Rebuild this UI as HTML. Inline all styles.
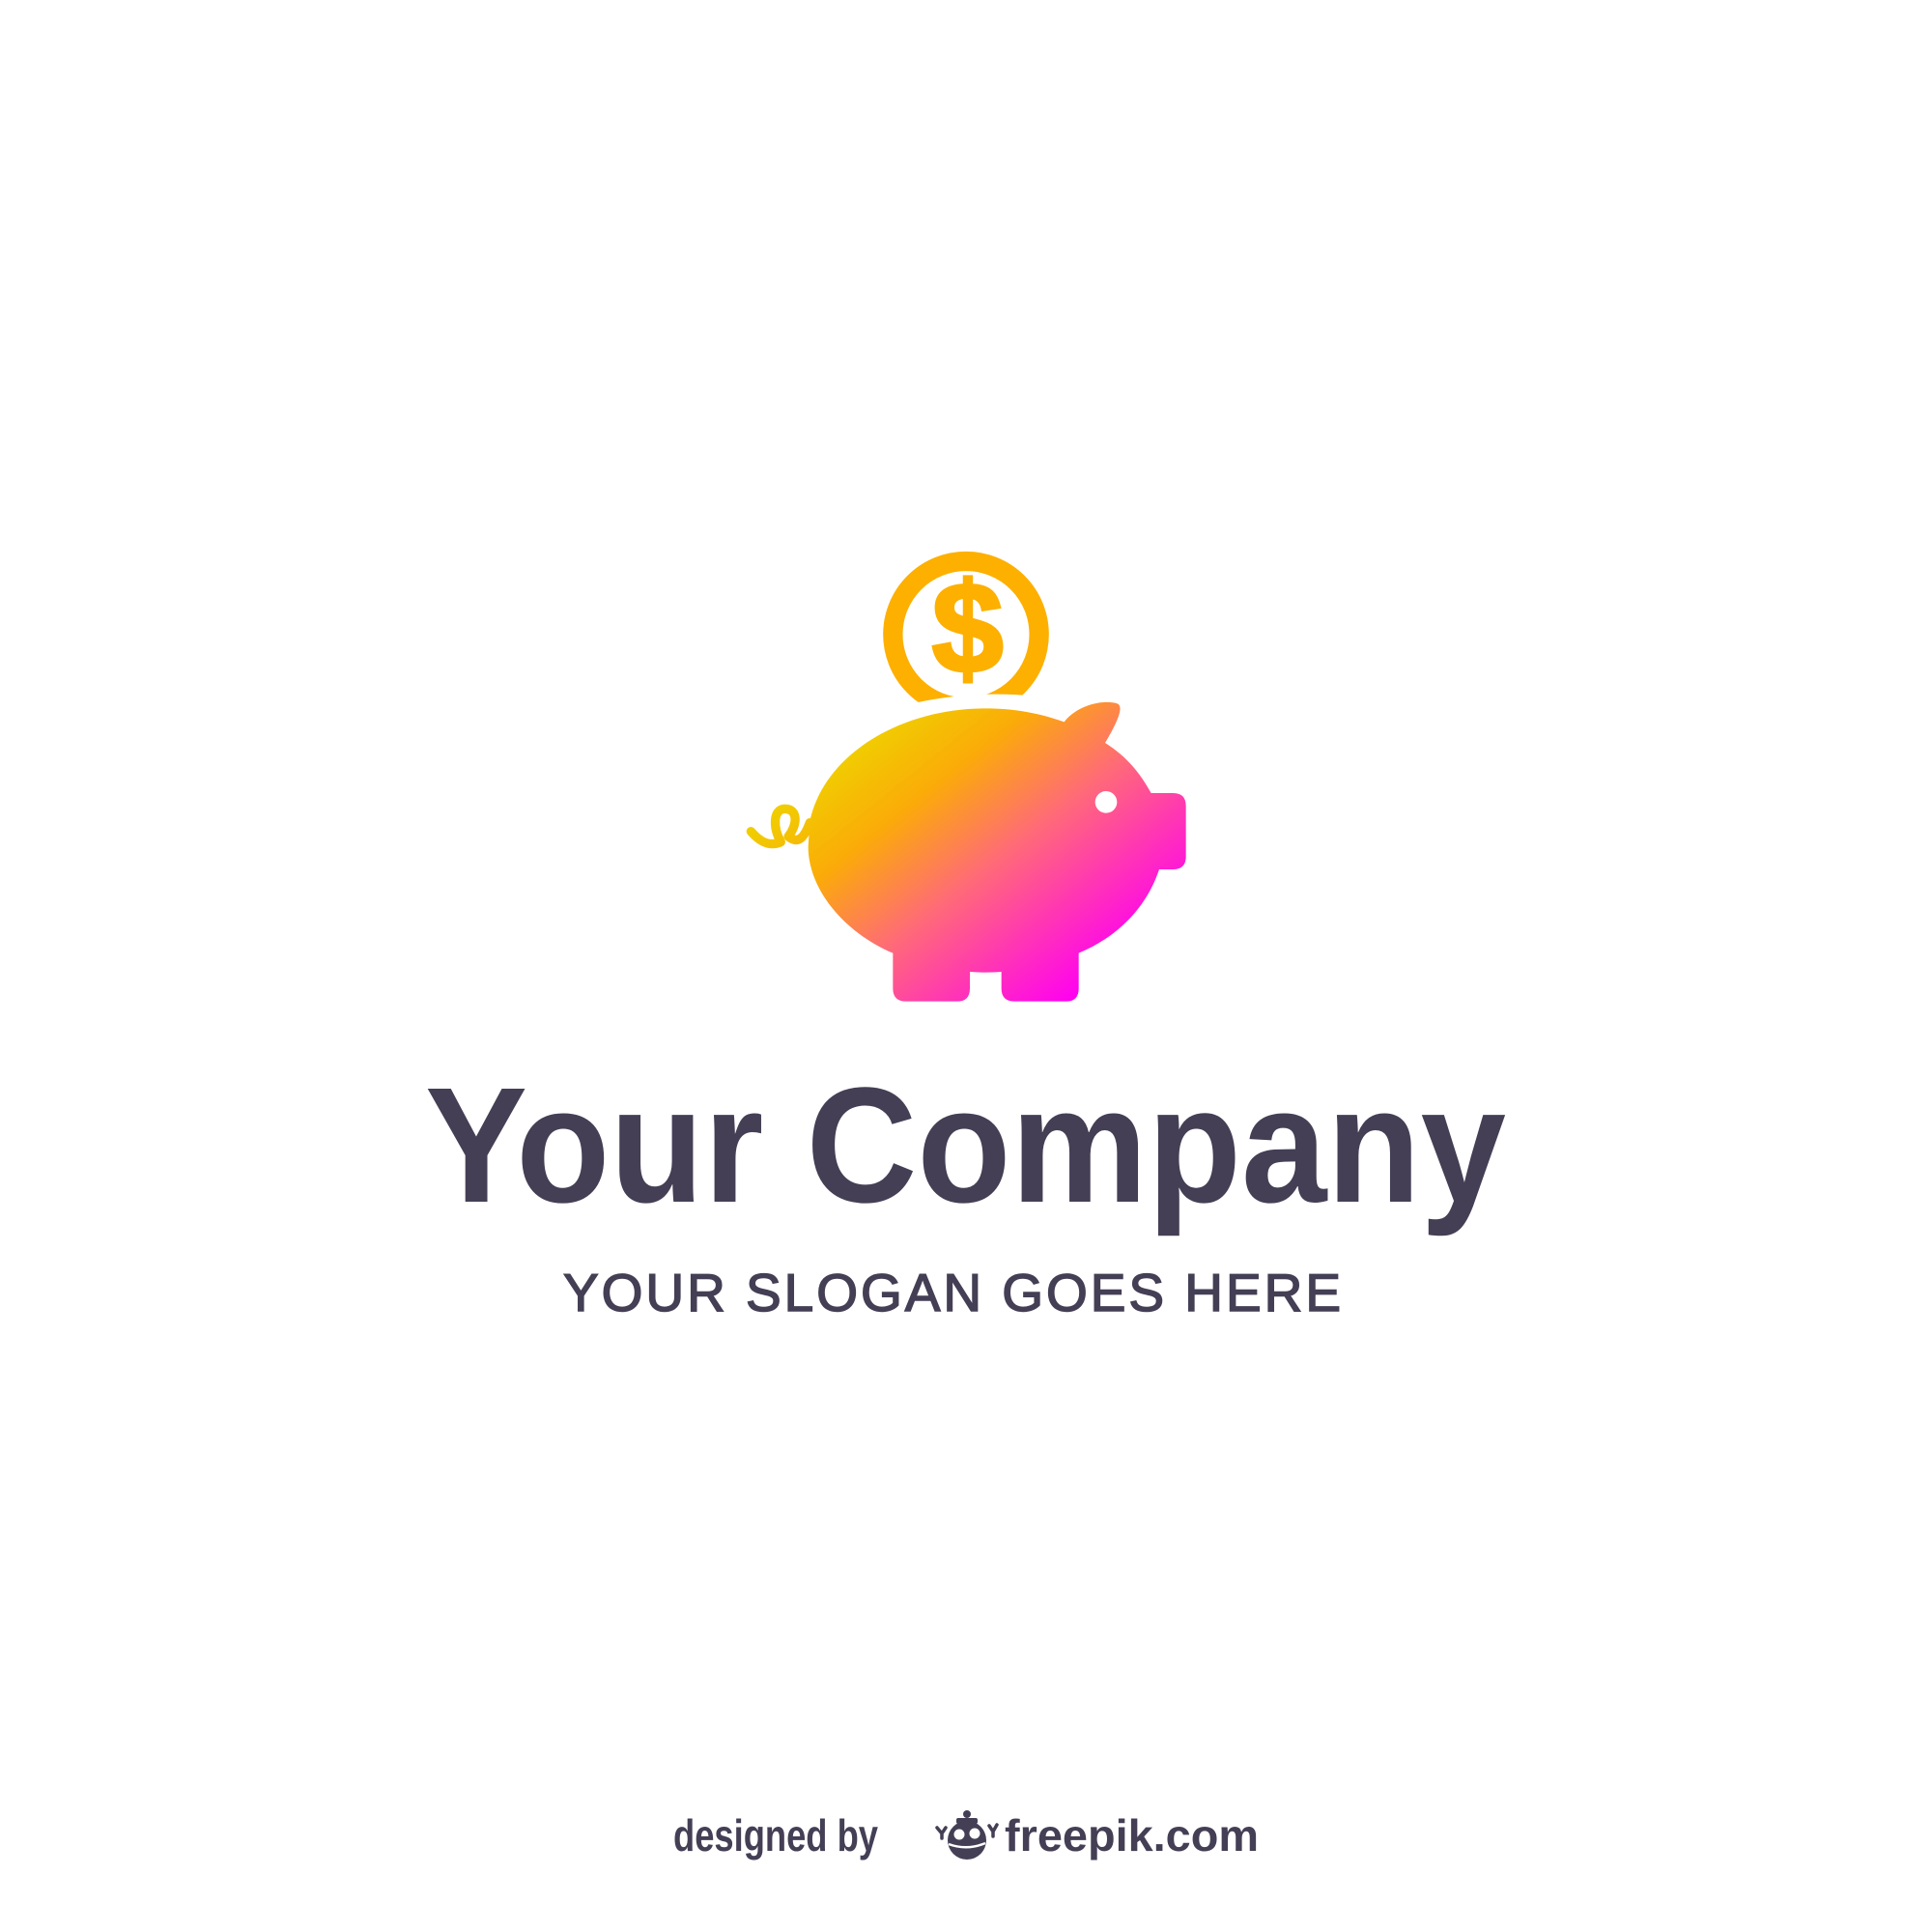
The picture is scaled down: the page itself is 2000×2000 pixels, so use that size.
<!DOCTYPE html>
<html><head><meta charset="utf-8"><style>
html,body{margin:0;padding:0;background:#fff;width:2000px;height:2000px;overflow:hidden}
svg{position:absolute;left:0;top:0}
</style></head><body>
<svg width="2000" height="2000" viewBox="0 0 2000 2000" xmlns="http://www.w3.org/2000/svg">
<defs>
<linearGradient id="g" gradientUnits="userSpaceOnUse" x1="420" y1="650" x2="1100" y2="1500">
<stop offset="0" stop-color="#eed400"/>
<stop offset="0.27" stop-color="#fbab08"/>
<stop offset="0.55" stop-color="#ff6a78"/>
<stop offset="1" stop-color="#ff00f2"/>
</linearGradient>
</defs>
<g transform="translate(740,540) scale(0.33333)">
<circle cx="780" cy="350" r="227" fill="none" stroke="#fdb000" stroke-width="61"/>
<path d="M600,568 Q800,520 1010,544 L1010,620 L600,620 Z" fill="#fff"/>
<path d="M640,563 L752,542 L834,536 L948,541 L948,560 L640,580 Z" fill="#fff"/>
<text x="785" y="468" font-family="Liberation Sans, sans-serif" font-weight="bold" font-size="400" fill="#fdb000" stroke="#fdb000" stroke-width="10" text-anchor="middle">$</text>
<path d="M295,930 C340,720 580,580 840,580 C930,580 1010,595 1085,622 C1120,575 1200,550 1250,565 C1275,575 1240,640 1212,687 C1280,730 1320,780 1355,843 L1423,843 Q1463,843 1463,883 L1463,1040 Q1463,1080 1423,1080 L1380,1080 C1340,1200 1250,1290 1130,1340 L1130,1450 Q1130,1490 1090,1490 L932,1490 Q890,1490 890,1450 L890,1398 Q840,1402 792,1398 L792,1450 Q792,1490 752,1490 L595,1490 Q553,1490 553,1450 L553,1340 C400,1275 290,1140 290,1010 Z" fill="url(#g)"/>
<path d="M112,962 C140,995 170,1010 205,995 C180,950 180,892 218,892 C258,892 258,940 228,978 C262,1005 280,975 295,935" fill="none" stroke="url(#g)" stroke-width="28" stroke-linecap="round" stroke-linejoin="round"/>
<circle cx="1215" cy="871" r="34" fill="#fff"/>
</g>
<text x="440" y="1244" font-family="Liberation Sans, sans-serif" font-weight="bold" font-size="170" fill="#443f55" textLength="1119" lengthAdjust="spacingAndGlyphs">Your Company</text>
<text x="583" y="1357" font-family="Liberation Sans, sans-serif" font-size="55" fill="#443f55" stroke="#443f55" stroke-width="1.5" textLength="805" lengthAdjust="spacing">YOUR SLOGAN GOES HERE</text>
<text x="697" y="1916" font-family="Liberation Sans, sans-serif" font-weight="bold" font-size="46" fill="#443f55" textLength="212" lengthAdjust="spacingAndGlyphs">designed by</text>
<g fill="#443f55">
<circle cx="1001" cy="1905" r="20"/>
<rect x="990" y="1882" width="22" height="6" rx="2"/>
<circle cx="1001" cy="1878" r="4"/>
<path d="M970,1892 l5,6 l4,-6 M975,1898 v5" stroke="#443f55" stroke-width="3.5" fill="none" stroke-linecap="round"/>
<path d="M1024,1890 l4,6 l4,-7 M1028,1896 v5" stroke="#443f55" stroke-width="3.5" fill="none" stroke-linecap="round"/>
</g>
<circle cx="993" cy="1899" r="5.5" fill="#fff"/>
<circle cx="1009" cy="1898" r="5.5" fill="#fff"/>
<path d="M982,1909 Q1001,1916 1020,1908" stroke="#fff" stroke-width="2.5" fill="none"/>
<text x="1040" y="1916" font-family="Liberation Sans, sans-serif" font-weight="bold" font-size="46" fill="#443f55" textLength="263" lengthAdjust="spacingAndGlyphs">freepik.com</text>
</svg>
</body></html>
